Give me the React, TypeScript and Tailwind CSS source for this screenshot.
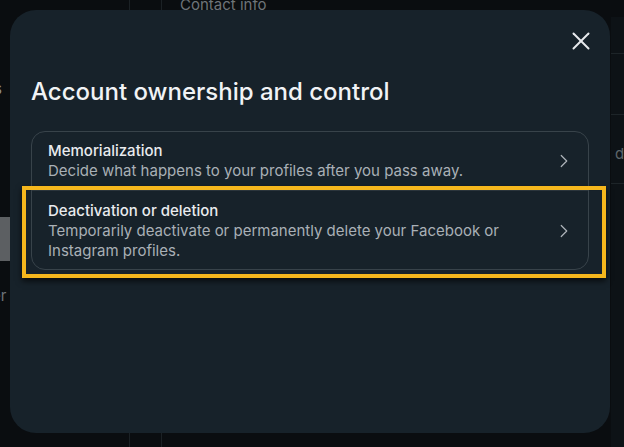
import { ChevronRight, X } from 'lucide-react'

const items = [
  {
    title: 'Memorialization',
    desc: 'Decide what happens to your profiles after you pass away.',
  },
  {
    title: 'Deactivation or deletion',
    desc: 'Temporarily deactivate or permanently delete your Facebook or Instagram profiles.',
  },
]

export default function App() {
  return (
    <div
      className="relative w-[624px] h-[447px] overflow-hidden bg-[#0a0d10]"
      style={{ fontFamily: 'Inter, "Noto Sans", sans-serif' }}
    >
      {/* page behind the dialog */}
      <div className="flex h-full">
        <div className="w-[130px] border-r border-[#1b2125] flex flex-col">
          <div className="mt-[78px] -ml-[6px] text-[15px] text-[#8a9096]">s</div>
          <div className="mt-[116px] w-[10px] h-[44px] bg-[#5c5f62]" />
          <div className="mt-[24px] -ml-[8px] text-[15px] text-[#6e7479]">er</div>
        </div>
        <div className="w-[32px] border-r border-[#1b2125]" />
        <div className="flex-1 flex flex-col">
          <div className="-mt-[6px] pl-[18px] text-[15px] text-[#6e7479]">Contact info</div>
          <div className="flex-1 flex justify-end">
            <div className="w-[13px] bg-[#0d1216] flex flex-col">
              <div className="mt-[36px] border-t border-[#1d2428]" />
              <div className="mt-[60px] border-t border-[#1d2428]" />
              <div className="mt-[28px] pl-[4px] text-[15px] text-[#5e656a]">d</div>
              <div className="mt-[18px] border-t border-[#1d2428]" />
            </div>
          </div>
        </div>
      </div>

      {/* dialog */}
      <div className="absolute left-[10px] top-[10px] w-[600px] h-[423px] rounded-[26px] bg-[#17222a] px-[21px]">
        <div className="flex justify-end pt-[16px] -mr-[7px]">
          <X className="w-[30px] h-[30px] text-[#e8eaed]" strokeWidth={1.6} />
        </div>
        <h2 className="mt-[21px] text-[24px] leading-[30px] font-medium text-[#f1f3f5]">
          Account ownership and control
        </h2>
        <div className="mt-[24px] rounded-[14px] border border-[#38434a]">
          {items.map((item, i) => (
            <div
              key={item.title}
              className={`flex items-center pl-[16px] pr-[13px] ${i > 0 ? 'pt-[10px] pb-[8px] border-t border-[#2b353c]' : 'py-[9px]'}`}
            >
              <div className="flex-1">
                <div className="text-[15px] leading-[20px] font-medium text-[#e9ebee]">{item.title}</div>
                <div className="text-[15px] leading-[20px] text-[#a9b0b6] pr-[40px]">{item.desc}</div>
              </div>
              <ChevronRight className="w-[22px] h-[22px] text-[#aeb4b9]" strokeWidth={1.3} />
            </div>
          ))}
        </div>
      </div>

      {/* highlight annotation */}
      <div className="absolute left-[22px] top-[186px] w-[584px] h-[92px] border-[4px] border-[#f5b71d] shadow-[0_3px_6px_rgba(0,0,0,0.7)]" />
    </div>
  )
}
